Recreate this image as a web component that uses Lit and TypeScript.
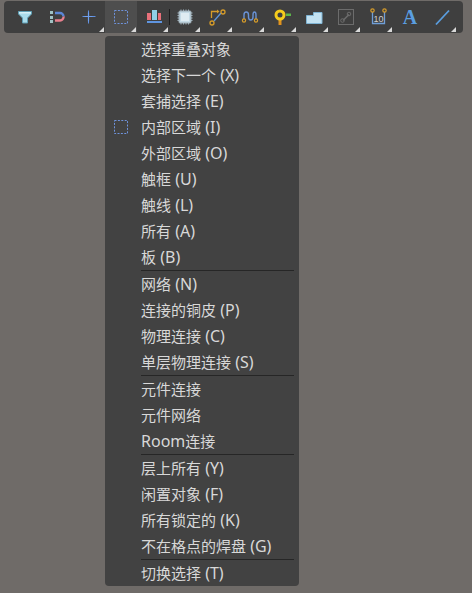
import { LitElement, html, css, svg } from "lit";
import { customElement } from "lit/decorators.js";

const dashed = svg`<rect x="9.5" y="9.5" width="13" height="13" fill="none" stroke="#6f93dc" stroke-dasharray="2 1.4"/>`;

const icons = [
  svg`<path d="M9.5 10.5h13v2.500l-4 4v5h-5v-5l-4-4z" fill="#a9dcec" stroke="#5f9fb5"/><path d="M10 11h12v1.500H10z" fill="#d6f0f7"/>`,
  svg`<g fill="#9fc2c4"><rect x="9" y="10" width="3" height="3"/><rect x="9" y="15" width="3" height="3"/><rect x="9" y="19" width="3" height="3"/></g><path d="M14 12h5a3.500 3.500 0 0 1 3.500 3.500" fill="none" stroke="#5b86d6" stroke-width="2.400"/><path d="M14 19.500h5a3.500 3.500 0 0 0 3.500-4" fill="none" stroke="#e8808e" stroke-width="2.400"/>`,
  svg`<path d="M15.5 9.5v13M9.5 15.5h13" stroke="#5f8fe0" stroke-width="1"/><path d="M15.5 11.5v9M11.5 15.5h8" stroke="#6f9fee" stroke-width="1.200"/>`,
  dashed,
  svg`<rect x="10" y="12" width="4" height="7" fill="#e8707a"/><rect x="15" y="9" width="5" height="10" fill="#8fd0e8"/><rect x="21" y="12" width="3" height="7" fill="#e8707a"/><rect x="10" y="20" width="15" height="2" fill="#5f95e0"/>`,
  svg`<rect x="10" y="10" width="12" height="12" rx="1" fill="#c5dbe6" stroke="#9aa9b2"/><rect x="12" y="12" width="8" height="8" fill="#dfecf2"/><path d="M12 8.500v1.500M14.500 8.500v1.500M17 8.500v1.500M19.500 8.500v1.500M12 22v1.500M14.500 22v1.500M17 22v1.500M19.500 22v1.500M8.500 12h1.500M8.500 14.500h1.500M8.500 17h1.500M8.500 19.500h1.500M22 12h1.500M22 14.500h1.500M22 17h1.500M22 19.500h1.500" stroke="#9fb0ba" stroke-width="1" fill="none"/>`,
  svg`<path d="M10.500 17V10.500h6" fill="none" stroke="#d69c2a" stroke-width="1.300"/><path d="M16 8.500l2.500 2-2.500 2z" fill="#d69c2a"/><path d="M13 20l7-8" stroke="#5f95d8" stroke-width="1.400"/><circle cx="11" cy="22" r="2" fill="none" stroke="#d69c2a" stroke-width="1.300"/><circle cx="22" cy="11" r="2" fill="none" stroke="#d69c2a" stroke-width="1.300"/>`,
  svg`<path d="M11 18v-4c0-4 4.500-4 4.500 0v2c0 4 4.500 4 4.500 0v-2c0-4 3-4 3 0v4" fill="none" stroke="#6a93d6" stroke-width="1.400"/><circle cx="11" cy="19.500" r="1.600" fill="none" stroke="#d69c2a" stroke-width="1.200"/><circle cx="23" cy="19.500" r="1.600" fill="none" stroke="#d69c2a" stroke-width="1.200"/>`,
  svg`<path d="M21 12.500h5v2.500h-5z" fill="#5cb54a"/><rect x="13.500" y="18" width="3" height="6" fill="#e0921e"/><circle cx="15" cy="14" r="4" fill="none" stroke="#f5cc1c" stroke-width="3"/>`,
  svg`<path d="M9.500 22.500v-8h7v-3h8.500v11z" fill="#c3e2f2" stroke="#7fb4d4"/>`,
  svg`<rect x="9.500" y="8.500" width="15" height="15" fill="none" stroke="#6c6c6c"/><path d="M14 19.500l6-6" stroke="#6c6c6c" stroke-width="1.600"/><circle cx="13.500" cy="19.500" r="1.800" fill="none" stroke="#6c6c6c"/><circle cx="20" cy="13" r="1.800" fill="none" stroke="#6c6c6c"/>`,
  svg`<path d="M11.500 11v11.500h12V11" fill="none" stroke="#6f9fd8" stroke-width="1.300"/><circle cx="11.500" cy="9.500" r="1.700" fill="none" stroke="#d69c2a" stroke-width="1.200"/><circle cx="23.500" cy="9.500" r="1.700" fill="none" stroke="#d69c2a" stroke-width="1.200"/><text x="17.500" y="20.500" text-anchor="middle" class="ten">10</text>`,
  svg`<text x="17" y="23" text-anchor="middle" class="big-a">A</text>`,
  svg`<path d="M11 23.500l13-14" stroke="#5a9ee0" stroke-width="1.800"/>`,
];

const noCorner = new Set([0, 1, 12]);

const groups = [
  ["选择重叠对象", "选择下一个 (X)", "套捕选择 (E)", "内部区域 (I)", "外部区域 (O)", "触框 (U)", "触线 (L)", "所有 (A)", "板 (B)"],
  ["网络 (N)", "连接的铜皮 (P)", "物理连接 (C)", "单层物理连接 (S)"],
  ["元件连接", "元件网络", "Room连接"],
  ["层上所有 (Y)", "闲置对象 (F)", "所有锁定的 (K)", "不在格点的焊盘 (G)"],
  ["切换选择 (T)"],
];

const label = (t: string) =>
  t
    .split(/([\u4e00-\u9fff]+)/)
    .filter(Boolean)
    .map((part) =>
      /[\u4e00-\u9fff]/.test(part) ? html`<span class="cjk">${part}</span>` : part
    );

@customElement("app-root")
export class AppRoot extends LitElement {
  static styles = css`
    :host {
      display: block;
      width: 472px;
      height: 593px;
      overflow: hidden;
      background: #6f6b68;
      font-family: "Noto Sans", "Noto Sans CJK SC", sans-serif;
      color: #d8d8d8;
    }
    .toolbar {
      display: flex;
      margin: 1px 0 0 4px;
      padding-left: 5px;
      width: 454px;
      height: 32px;
      background: #3f3f3f;
      border-radius: 4px;
    }
    .tool {
      position: relative;
      width: 32px;
      height: 32px;
      flex: none;
    }
    .tool svg {
      display: block;
    }
    .tool.active {
      background: #4e4e4e;
    }
    .tool.divided::before {
      content: "";
      position: absolute;
      left: 0;
      top: 8px;
      height: 16px;
      width: 1px;
      background: #1e1e1e;
    }
    .corner {
      position: absolute;
      right: 1px;
      bottom: 1px;
      width: 0;
      height: 0;
      border-style: solid;
      border-width: 0 0 5px 5px;
      border-color: transparent transparent #d9d9d9 transparent;
    }
    .ten {
      font: 9px "Liberation Sans", sans-serif;
      fill: #cfcfcf;
    }
    .big-a {
      font: bold 20px "Liberation Serif", serif;
      fill: #5a9ee0;
    }
    .menu {
      width: 194px;
      height: 550px;
      margin: 3px 0 0 105px;
      background: #424242;
      border-radius: 4px;
      box-sizing: border-box;
    }
    .item {
      display: flex;
      align-items: center;
      height: 26px;
      font-size: 16px;
      line-height: 26px;
      white-space: nowrap;
    }
    .cjk {
      font-size: 15px;
    }
    .slot {
      width: 36px;
      height: 26px;
      flex: none;
    }
    .slot svg {
      display: block;
    }
    .sep {
      height: 1px;
      margin-left: 36px;
      margin-right: 5px;
      background: #262626;
    }
  `;

  render() {
    return html`
      <div class="toolbar">
        ${icons.map(
          (ic, i) => html`<div class="tool ${i === 3 ? "active" : ""} ${i === 5 ? "divided" : ""}">
            <svg width="32" height="32" viewBox="0 0 32 32">${ic}</svg>
            ${noCorner.has(i) ? "" : html`<span class="corner"></span>`}
          </div>`
        )}
      </div>
      <div class="menu">
        ${groups.map(
          (g, gi) => html`
            ${gi > 0 ? html`<div class="sep"></div>` : ""}
            ${g.map(
              (t) => html`<div class="item">
                <span class="slot">
                  ${t.startsWith("内部区域")
                    ? html`<svg width="32" height="26" viewBox="0 3 32 26">${dashed}</svg>`
                    : ""}
                </span>
                <span>${label(t)}</span>
              </div>`
            )}
          `
        )}
      </div>
    `;
  }
}
